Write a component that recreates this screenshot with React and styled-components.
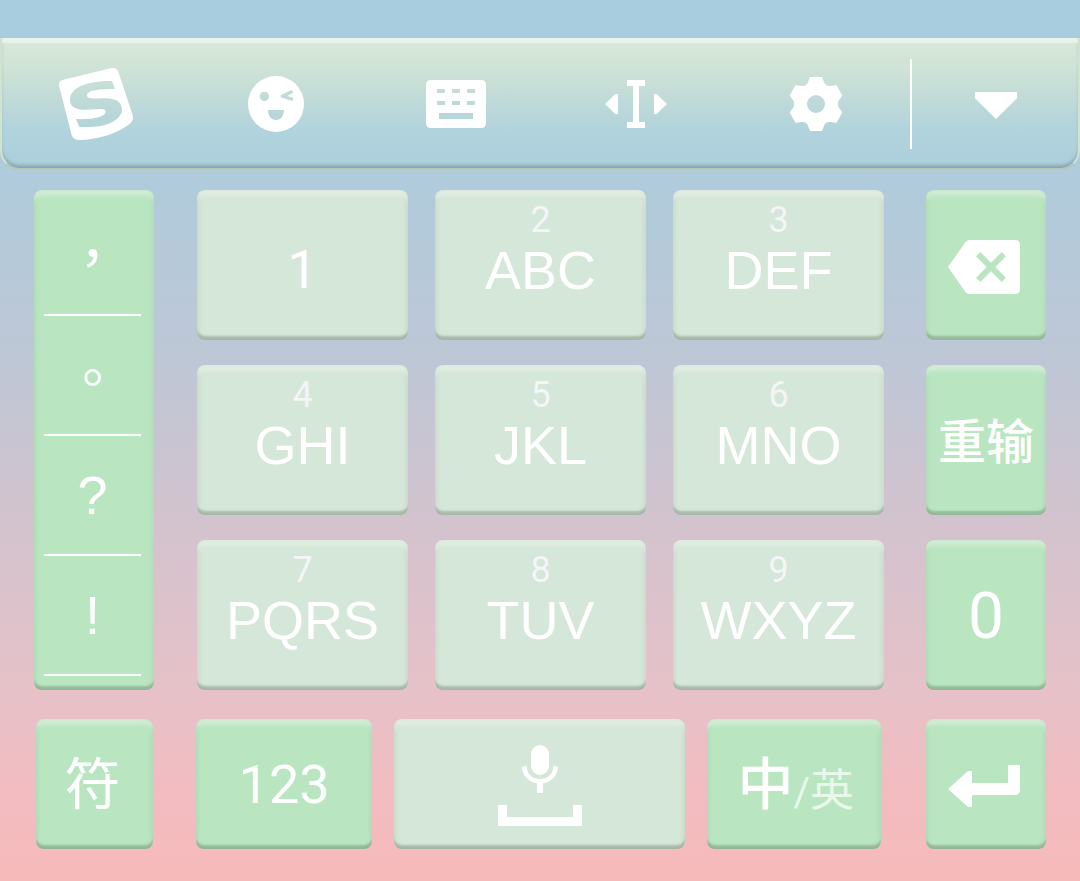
import React from "react";
import styled, { createGlobalStyle } from "styled-components";

const GlobalStyle = createGlobalStyle`
  *, *::before, *::after { box-sizing: border-box; }
  body { margin: 0; }
`;

const latin = '"Liberation Sans", Arial, sans-serif';
const digits = 'Roboto, "Liberation Sans", sans-serif';
const chinese = '"Noto Sans CJK SC", sans-serif';
const centredPunctuation = '"Noto Sans CJK TC", sans-serif';

const Keyboard = styled.main`
  min-height: 100vh;
  padding: 38px 0 32px;
  color: #fff;
  background: linear-gradient(
    #a7cddf 0%,
    #a9cddf 12%,
    #b1cbdb 22%,
    #bdc7d6 40%,
    #d2c3ce 59%,
    #e7c1c8 79%,
    #f2bcc0 90%,
    #f7babb 100%
  );
`;

const Toolbar = styled.header`
  display: flex;
  height: 132px;
  padding: 2px 0 0 4px;
  border: solid #cfe3cd;
  border-width: 0 2px 2px;
  border-bottom-color: #b6c7b5;
  border-radius: 0 0 20px 20px;
  background: linear-gradient(
    #d5e7d8 6%,
    #cee3d6 25%,
    #bfdad8 48%,
    #b1d3dc 72%,
    #abcfdc 100%
  );
  box-shadow:
    inset 0 6px 2px -1px rgba(255, 255, 255, 0.5),
    inset 0 -4px 4px -2px rgba(80, 105, 120, 0.55);
`;

const Tools = styled.nav`
  flex: 1;
  display: grid;
  grid-template-columns: repeat(5, 1fr);
`;

const ToolButton = styled.button`
  display: flex;
  align-items: center;
  justify-content: center;
  min-width: 0;
  padding: 0;
  border: 0;
  background: none;
  color: inherit;
  cursor: pointer;
`;

const CollapseButton = styled(ToolButton)`
  width: 166px;
  padding-left: 2px;
`;

const Divider = styled.span`
  width: 2px;
  height: 90px;
  margin-left: 4px;
  align-self: center;
  background: #fff;
`;

const Icon = styled.svg`
  display: block;
  flex: none;
  width: ${(p) => p.$w}px;
  height: ${(p) => p.$h}px;
  fill: currentColor;
  fill-rule: evenodd;
`;

const Pad = styled.section`
  display: grid;
  grid-template-columns: 120px 1fr 120px;
  column-gap: 42px;
  row-gap: 29px;
  padding: 20px 34px 0;
`;

const raised = `
  border-radius: 8px;
  box-shadow:
    inset 0 6px 4px -1px rgba(255, 255, 255, 0.42),
    inset 0 -5px 2px -1px rgba(70, 80, 70, 0.26),
    inset 0 0 5px rgba(90, 120, 90, 0.26);
`;

const PunctuationColumn = styled.div`
  display: flex;
  flex-direction: column;
  padding: 6px 13px 14px 10px;
  background: #b9e6c0;
  ${raised}
`;

const PunctuationButton = styled.button`
  flex: 1;
  padding: 0;
  border: 0;
  border-bottom: 2px solid #fff;
  background: none;
  color: inherit;
  font: 54px/60px ${(p) => p.$font};
  cursor: pointer;
`;

const LetterGrid = styled.div`
  display: grid;
  grid-template-columns: repeat(3, 1fr);
  grid-auto-rows: 150px;
  gap: 25px 27px;
  padding-left: 1px;
`;

const SideColumn = styled.div`
  display: grid;
  grid-auto-rows: 150px;
  row-gap: 25px;
`;

const BottomRow = styled.div`
  display: grid;
  grid-template-columns: 176fr 290fr 174fr;
  grid-auto-rows: 130px;
  gap: 22px;
  padding-right: 3px;
`;

const Key = styled.button`
  display: flex;
  align-items: center;
  justify-content: center;
  min-width: 0;
  padding: ${(p) => p.$pad || "0"};
  border: 0;
  background: ${(p) => (p.$accent ? "#b9e6c0" : "#d5e7d8")};
  color: inherit;
  white-space: nowrap;
  font: ${(p) => p.$weight || 400} ${(p) => p.$size || 54}px/60px
    ${(p) => p.$font || digits};
  cursor: pointer;
  ${raised}
`;

const SymbolKey = styled(Key)`
  margin: 0 1px 0 2px;
`;

const LetterKey = styled(Key)`
  flex-direction: column;
  justify-content: flex-start;
  padding: 10px 0 0;
`;

const Hint = styled.small`
  height: 40px;
  color: #f3f5f6;
  font: 36px/40px ${digits};
`;

const Letters = styled.span`
  font: 54px/60px ${(p) => p.$font || latin};
`;

const Secondary = styled.span`
  padding-top: 20px;
  color: #e9f7eb;
  font-size: 44px;
  font-weight: 400;
`;

const Slash = styled.span`
  font: 40px/60px ${digits};
`;

const letterKeys = [
  ["", "1"],
  ["2", "ABC"],
  ["3", "DEF"],
  ["4", "GHI"],
  ["5", "JKL"],
  ["6", "MNO"],
  ["7", "PQRS"],
  ["8", "TUV"],
  ["9", "WXYZ"],
];

const punctuation = [
  ["，", centredPunctuation],
  ["。", centredPunctuation],
  ["?", latin],
  ["!", latin],
];

const LogoIcon = () => (
  <Icon $w={80} $h={80} viewBox="168 102 240 240" aria-hidden="true">
    <path d="M177 166Q175 153 190 149L335 114Q350 112 355 126L398 255Q402 272 388 283C350 312 290 330 238 330Q220 330 215 316Z M336 153L345 177C300 177 261 180 261 197C261 208 290 205 318 205C350 206 366 218 366 238C366 268 324 291 270 291L238 291L228 267C270 269 317 264 317 244C317 235 300 236 280 238C238 243 210 236 210 210C210 172 262 152 336 153Z" />
  </Icon>
);

const WinkIcon = () => (
  <Icon $w={80} $h={80} viewBox="708 102 240 240" aria-hidden="true">
    <path d="M744 222a84 84 0 1 0 168 0a84 84 0 1 0 -168 0Z M779 199a14 14 0 1 0 28 0a14 14 0 1 0 -28 0Z M842 196L875 179L880 188L862 198L880 203L877 213L842 202Z M804 240H852C852 258 842 270 828 270C814 270 804 258 804 240Z" />
  </Icon>
);

const KeyboardIcon = () => (
  <Icon $w={80} $h={80} viewBox="168 102 240 240" aria-hidden="true">
    <path d="M213 150H363Q378 150 378 165V279Q378 294 363 294H213Q198 294 198 279V165Q198 150 213 150Z M231 177h24v12h-24Z M276 177h24v12h-24Z M321 177h24v12h-24Z M231 213h24v12h-24Z M276 213h24v12h-24Z M321 213h24v12h-24Z M237 249h102v18h-102Z" />
  </Icon>
);

const CursorIcon = () => (
  <Icon $w={80} $h={80} viewBox="708 102 240 240" aria-hidden="true">
    <path d="M801 150H855V168H837V276H855V294H801V276H819V168H801Z M735 222L766 192H774V252H766Z M921 222L890 192H882V252H890Z" />
  </Icon>
);

const GearIcon = () => (
  <Icon $w={80} $h={80} viewBox="168 102 240 240" aria-hidden="true">
    <path d="M270 141H306L312 156Q315 168 330 168L350 166L367 197L357 210Q351 222 357 234L367 247L350 278L330 276Q315 276 312 288L306 303H270L264 288Q261 276 246 276L226 278L209 247L219 234Q225 222 219 210L209 197L226 166L246 168Q261 168 264 156Z M261 222a27 27 0 1 0 54 0a27 27 0 1 0 -54 0Z" />
  </Icon>
);

const CollapseIcon = () => (
  <Icon $w={80} $h={80} viewBox="708 102 240 240" aria-hidden="true">
    <path d="M765 186H891V205L828 267L765 205Z" />
  </Icon>
);

const DeleteIcon = () => (
  <Icon $w={72} $h={54} viewBox="864 180 216 162" aria-hidden="true">
    <path d="M864 261L916 187Q921 180 930 180H1064Q1080 180 1080 196V326Q1080 342 1064 342H930Q921 342 916 335Z M948 229L980 261L948 293L961 306L993 274L1025 306L1038 293L1006 261L1038 229L1025 216L993 248L961 216Z" />
  </Icon>
);

const EnterIcon = () => (
  <Icon $w={72} $h={42} viewBox="774 195 216 126" aria-hidden="true">
    <path d="M774 267L834 213H846V249H954V195H990V269Q990 285 974 285H846V321H834Z" />
  </Icon>
);

const SpaceIcon = () => (
  <Icon $w={84} $h={81} viewBox="354 135 252 243" aria-hidden="true">
    <rect x="453" y="135" width="54" height="90" rx="27" />
    <path d="M426 200L440 198C440 223 458 237 480 237C502 237 520 223 520 198L534 200C534 226 514 246 489 250V279H471V250C446 246 426 226 426 200Z" />
    <path d="M354 315H381V351H579V315H606V378H354Z" />
  </Icon>
);

const tools = [
  ["搜狗输入法", LogoIcon],
  ["表情", WinkIcon],
  ["键盘", KeyboardIcon],
  ["光标", CursorIcon],
  ["设置", GearIcon],
];

export default function App() {
  return (
    <>
      <GlobalStyle />
      <Keyboard>
        <Toolbar>
          <Tools>
            {tools.map(([label, ToolIcon]) => (
              <ToolButton key={label} type="button" aria-label={label}>
                <ToolIcon />
              </ToolButton>
            ))}
          </Tools>
          <Divider />
          <CollapseButton type="button" aria-label="收起">
            <CollapseIcon />
          </CollapseButton>
        </Toolbar>

        <Pad>
          <PunctuationColumn>
            {punctuation.map(([mark, font]) => (
              <PunctuationButton key={mark} type="button" $font={font} lang="zh-TW">
                {mark}
              </PunctuationButton>
            ))}
          </PunctuationColumn>

          <LetterGrid>
            {letterKeys.map(([hint, letters]) => (
              <LetterKey key={letters} type="button">
                <Hint>{hint}</Hint>
                <Letters $font={hint ? latin : digits}>{letters}</Letters>
              </LetterKey>
            ))}
          </LetterGrid>

          <SideColumn>
            <Key type="button" $accent $pad="4px 4px 0 0" aria-label="删除">
              <DeleteIcon />
            </Key>
            <Key type="button" $accent $font={chinese} $size={48} $weight={500} $pad="0 0 4px">
              重输
            </Key>
            <Key type="button" $accent $size={64} $pad="4px 0 0">
              0
            </Key>
          </SideColumn>

          <SymbolKey type="button" $accent $font={chinese} $size={56} $pad="0 4px 8px 0">
            符
          </SymbolKey>

          <BottomRow>
            <Key type="button" $accent $size={54} $pad="2px 0 0">
              123
            </Key>
            <Key type="button" $pad="2px 0 0 2px" aria-label="空格">
              <SpaceIcon />
            </Key>
            <Key type="button" $accent $font={chinese} $size={56} $weight={500} $pad="0 0 8px 4px">
              中
              <Secondary>
                <Slash>/</Slash>英
              </Secondary>
            </Key>
          </BottomRow>

          <Key type="button" $accent $pad="4px 4px 0 0" aria-label="换行">
            <EnterIcon />
          </Key>
        </Pad>
      </Keyboard>
    </>
  );
}
